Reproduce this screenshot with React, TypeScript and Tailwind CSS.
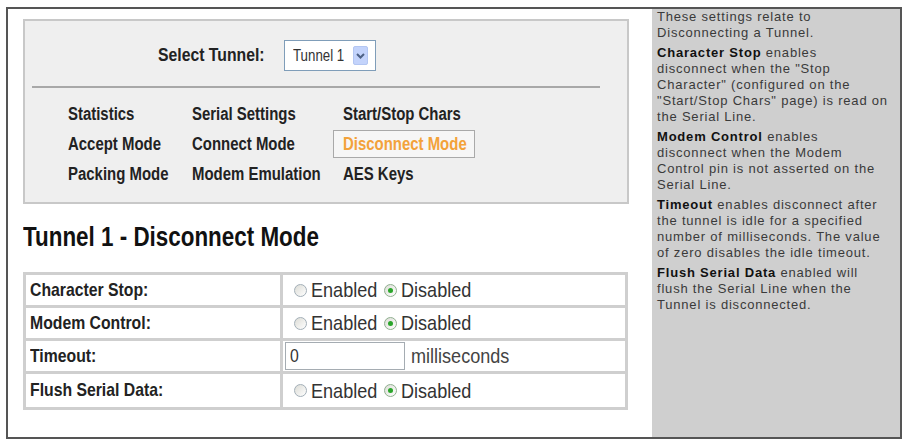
import React from "react";

const navRows = [
  ["Statistics", "Serial Settings", "Start/Stop Chars"],
  ["Accept Mode", "Connect Mode", "Disconnect Mode"],
  ["Packing Mode", "Modem Emulation", "AES Keys"],
];

// the reference text is tall and narrow; squeeze Arial-metric text sideways
function N({ children, className = "" }: { children: React.ReactNode; className?: string }) {
  return (
    <span className={"inline-block origin-left scale-x-[0.83] whitespace-nowrap " + className}>{children}</span>
  );
}

function Radio({ checked }: { checked?: boolean }) {
  return (
    <span
      className={
        "inline-flex h-[13px] w-[13px] shrink-0 items-center justify-center rounded-full border bg-gradient-to-br from-[#dcdcd6] to-white " +
        (checked ? "border-[#8fb08f]" : "border-[#a3afb8]")
      }
    >
      {checked && <span className="h-[5px] w-[5px] rounded-full bg-[#2aa52a]" />}
    </span>
  );
}

function RadioPair() {
  return (
    <div className="flex items-center text-[21px] text-[#333]">
      <Radio />
      <span className="ml-[4px] w-[73px]">
        <span className="inline-block origin-left scale-x-[0.86] whitespace-nowrap">Enabled</span>
      </span>
      <Radio checked />
      <span className="ml-[4px]">
        <span className="inline-block origin-left scale-x-[0.86] whitespace-nowrap">Disabled</span>
      </span>
    </div>
  );
}

function Row({ label, children, last }: { label: string; children: React.ReactNode; last?: boolean }) {
  return (
    <div className={"flex h-[33px] " + (last ? "" : "border-b-[3px] border-[#cfcfcf]")}>
      <div className="flex w-[257px] items-center border-r-[3px] border-[#cfcfcf] pl-[4px] text-[19px] font-bold text-[#222]">
        <N>{label}</N>
      </div>
      <div className="flex flex-1 items-center pl-[11px]">{children}</div>
    </div>
  );
}

export default function App() {
  return (
    <div className="h-[440px] w-[903px] bg-white pb-px pl-[6px] pr-px pt-[7px] font-['Liberation_Sans',Arial,sans-serif]">
      <div className="flex h-full border-2 border-[#555]">
        <div className="w-[644px] pl-[15px] pt-[10px]">
          {/* tunnel navigation box */}
          <div className="h-[185px] w-[606px] border-2 border-[#c8c8c8] bg-[#efefef]">
            <div className="ml-[133px] mt-[19px] flex items-center">
              <span className="w-[126px] text-[19px] font-bold text-[#222]">
                <N>Select Tunnel:</N>
              </span>
              <div className="flex h-[31px] w-[92px] items-center justify-between border border-[#7f9db9] bg-white pl-[8px] pr-[7px]">
                <span className="w-[54px] text-[16px] text-[#333]">
                  <N>Tunnel 1</N>
                </span>
                <span className="flex h-[19px] w-[15px] items-center justify-center rounded-[2px] border border-[#b3c6f2] bg-[#c3d3fb]">
                  <svg width="9" height="6" viewBox="0 0 9 6">
                    <path d="M1 1 L4.5 4.5 L8 1" fill="none" stroke="#4d6185" strokeWidth="2" />
                  </svg>
                </span>
              </div>
            </div>
            <div className="ml-[7px] mt-[15px] h-[2px] w-[568px] bg-[#a8a8a8]" />
            <div className="mt-[11px] pl-[43px]">
              {navRows.map((row) => (
                <div key={row[0]} className="flex h-[30px] items-center text-[18px] font-bold text-[#222]">
                  <span className="w-[124px]">
                    <N>{row[0]}</N>
                  </span>
                  <span className="w-[141px]">
                    <N>{row[1]}</N>
                  </span>
                  {row[2] === "Disconnect Mode" ? (
                    <span className="flex h-[28px] w-[142px] items-center border border-[#a9a9a9] bg-[#f6f6f6] pl-[9px] text-[#f3a23a]">
                      <N>{row[2]}</N>
                    </span>
                  ) : (
                    <span className="pl-[10px]">
                      <N>{row[2]}</N>
                    </span>
                  )}
                </div>
              ))}
            </div>
          </div>

          <h1 className="mt-[18px] text-[27px] font-bold leading-[30px] text-[#111]">
            <N>Tunnel 1 - Disconnect Mode</N>
          </h1>

          <div className="mt-[20px] w-[605px] border-[3px] border-[#cfcfcf] bg-white">
            <Row label="Character Stop:">
              <RadioPair />
            </Row>
            <Row label="Modem Control:">
              <RadioPair />
            </Row>
            <Row label="Timeout:">
              <div className="-ml-[9px] flex items-center">
                <div className="flex h-[28px] w-[120px] items-center border border-[#a5acb2] bg-white pl-[4px] text-[19px] text-[#333]">
                  <N>0</N>
                </div>
                <span className="ml-[6px] text-[21px] text-[#444]">
                  <span className="inline-block origin-left scale-x-[0.86] whitespace-nowrap">milliseconds</span>
                </span>
              </div>
            </Row>
            <Row label="Flush Serial Data:" last>
              <RadioPair />
            </Row>
          </div>
        </div>

        {/* help sidebar */}
        <aside className="flex-1 bg-[#cfcfcf] pl-[5px] text-[13px] leading-[16px] tracking-[0.8px] text-[#3a3a3a]">
          <p>
            These settings relate to
            <br />
            Disconnecting a Tunnel.
          </p>
          <p className="mt-[4px]">
            <b className="text-[#111]">Character Stop</b> enables
            <br />
            disconnect when the "Stop
            <br />
            Character" (configured on the
            <br />
            "Start/Stop Chars" page) is read on
            <br />
            the Serial Line.
          </p>
          <p className="mt-[4px]">
            <b className="text-[#111]">Modem Control</b> enables
            <br />
            disconnect when the Modem
            <br />
            Control pin is not asserted on the
            <br />
            Serial Line.
          </p>
          <p className="mt-[4px]">
            <b className="text-[#111]">Timeout</b> enables disconnect after
            <br />
            the tunnel is idle for a specified
            <br />
            number of milliseconds. The value
            <br />
            of zero disables the idle timeout.
          </p>
          <p className="mt-[4px]">
            <b className="text-[#111]">Flush Serial Data</b> enabled will
            <br />
            flush the Serial Line when the
            <br />
            Tunnel is disconnected.
          </p>
        </aside>
      </div>
    </div>
  );
}
